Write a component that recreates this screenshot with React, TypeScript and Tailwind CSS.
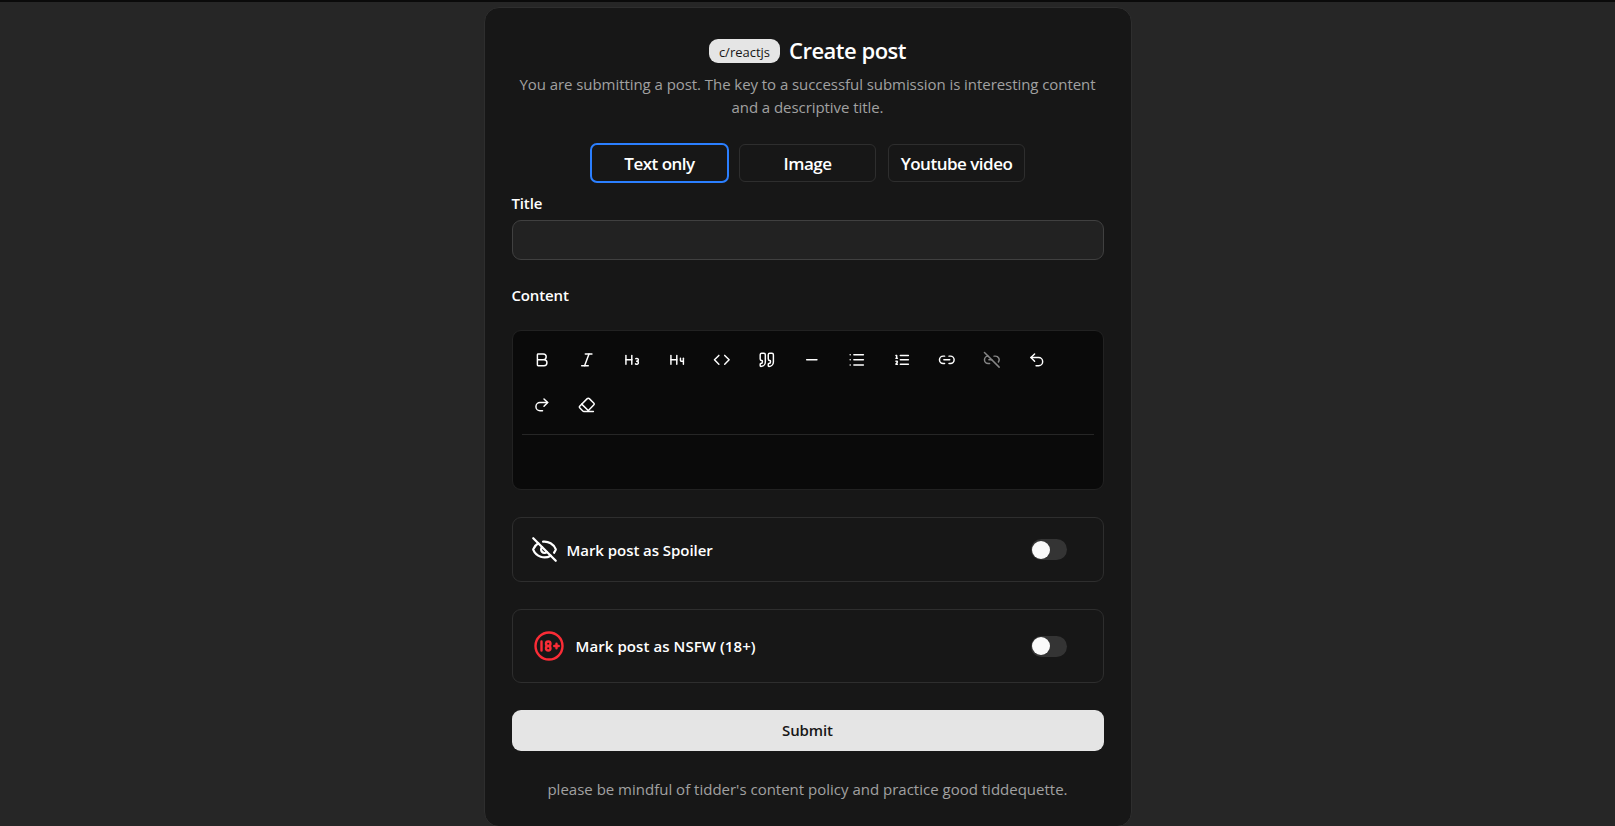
import React from 'react';
import {
  Bold, Italic, Heading3, Heading4, Code, Quote, Minus, Link2, Link2Off, Undo2, EyeOff, Eraser, List,
} from 'lucide-react';

const Redo = () => (
  <svg width="17.6" height="17.6" viewBox="0 0 24 24" fill="none" stroke="currentColor" strokeWidth="2" strokeLinecap="round" strokeLinejoin="round">
    <path d="m15 14 5-5-5-5" />
    <path d="M20 9H9.500a5.500 5.500 0 0 0 0 11H13" />
  </svg>
);

const OrderedList = () => (
  <svg width="17.6" height="17.6" viewBox="0 0 24 24" fill="none" stroke="currentColor" strokeWidth="2" strokeLinecap="round" strokeLinejoin="round">
    <path d="M10 12h11M10 18h11M10 6h11M4 10h2M4 6h1v4M6 18H4c0-1 2-2 2-3s-1-1.500-2-1" />
  </svg>
);

const Rating18 = () => (
  <svg width="36" height="36" viewBox="0 0 24 24" fill="none" stroke="currentColor" strokeWidth="1.6" strokeLinecap="round" strokeLinejoin="round">
    <circle cx="12" cy="12" r="9" />
    <path d="M10 10.500a1.500 1.500 0 1 0 3 0a1.500 1.500 0 1 0 -3 0" />
    <path d="M10 13.500a1.500 1.500 0 1 0 3 0a1.500 1.500 0 1 0 -3 0" />
    <path d="M7 15v-6M15.500 12h3M17 10.500v3" />
  </svg>
);

const S = 17.6;
const tools = [
  <Bold size={S} />, <Italic size={S} />, <Heading3 size={S} />, <Heading4 size={S} />, <Code size={S} />,
  <Quote size={S} />, <Minus size={S} />, <List size={S} />, <OrderedList />, <Link2 size={S} />,
  <span className="opacity-50"><Link2Off size={S} /></span>, <Undo2 size={S} />, <Redo />, <Eraser size={S} />,
];

function Switch() {
  return (
    <button role="switch" aria-checked="false" className="flex h-[21px] w-[36px] items-center rounded-full bg-[#343434] pl-px">
      <span className="size-[18px] rounded-full bg-neutral-50" />
    </button>
  );
}

export default function App() {
  return (
    <div className="h-[826px] overflow-hidden border-t-2 border-[#0a0a0a] bg-[#262626] pt-[5px] font-['Open_Sans','Noto_Sans',sans-serif] text-white">
      <main className="mx-auto flex h-[820px] w-[648px] flex-col rounded-[15px] border border-[#2e2e2e] bg-[#171717] px-[27px]">
        <header className="mt-[31px] flex h-[24px] items-center justify-center gap-[9px]">
          <span className="flex h-[24px] w-[71px] items-center justify-center rounded-[9px] bg-[#e5e5e5] pt-[3px] text-[13px] font-medium text-[#171717]">c/reactjs</span>
          <h1 className="whitespace-nowrap pb-[2px] text-[22px] leading-[24px] font-semibold tracking-[-0.5px]">Create post</h1>
        </header>
        <p className="mt-[10px] whitespace-nowrap text-center text-[15px] leading-[23px] tracking-[-0.06px] text-[#a1a1a1]">
          You are submitting a post. The key to a successful submission is interesting content<br />and a descriptive title.
        </p>
        <div className="mt-[24px] flex h-[40px] items-center justify-center text-[17px] font-semibold tracking-[-0.5px]">
          <button className="h-[40px] w-[139px] rounded-[7px] border-2 border-[#2b7fff] pt-px">Text only</button>
          <button className="ml-[10px] h-[38px] w-[137px] rounded-[6px] border border-[#2e2e2e] pt-px">Image</button>
          <button className="ml-[12px] h-[38px] w-[137px] whitespace-nowrap rounded-[6px] border border-[#2e2e2e] pt-px">Youtube video</button>
        </div>
        <label className="mt-[9px] h-[22px] text-[15px] leading-[22px] font-semibold tracking-[-0.15px]">Title</label>
        <input className="mt-[6px] h-[40px] shrink-0 rounded-[9px] border border-[#404040] bg-[#222222]" />
        <label className="mt-[24px] h-[22px] text-[15px] leading-[22px] font-semibold tracking-[-0.15px]">Content</label>
        <section className="mt-[24px] h-[160px] shrink-0 rounded-[9px] border border-[#222222] bg-[#0a0a0a] px-[9px] pt-[6px]">
          <div className="flex h-[98px] flex-wrap content-start border-b border-[#262626]">
            {tools.map((icon, i) => (
              <button key={i} className="flex h-[45px] w-[45px] items-center justify-center pt-[0.5px] pr-[4px]">{icon}</button>
            ))}
          </div>
        </section>
        <section className="mt-[27px] flex h-[65px] shrink-0 items-center rounded-[9px] border border-[#2e2e2e] pr-[36px] pl-[18px]">
          <EyeOff size={27} />
          <span className="ml-[9px] flex-1 pt-[2px] text-[15px] font-semibold tracking-[-0.05px]">Mark post as Spoiler</span>
          <Switch />
        </section>
        <section className="mt-[27px] flex h-[74px] shrink-0 items-center rounded-[9px] border border-[#2e2e2e] pr-[36px] pl-[18px]">
          <span className="text-[#fb2c36]"><Rating18 /></span>
          <span className="ml-[9px] flex-1 text-[15px] font-semibold tracking-[0.08px]">Mark post as NSFW (18+)</span>
          <Switch />
        </section>
        <button className="mt-[27px] h-[41px] shrink-0 rounded-[9px] bg-[#e5e5e5] text-[15px] font-semibold tracking-[-0.1px] text-[#171717]">Submit</button>
        <p className="mt-[27px] whitespace-nowrap text-center text-[15px] leading-[23px] text-[#a1a1a1]">please be mindful of tidder&#39;s content policy and practice good tiddequette.</p>
      </main>
    </div>
  );
}
